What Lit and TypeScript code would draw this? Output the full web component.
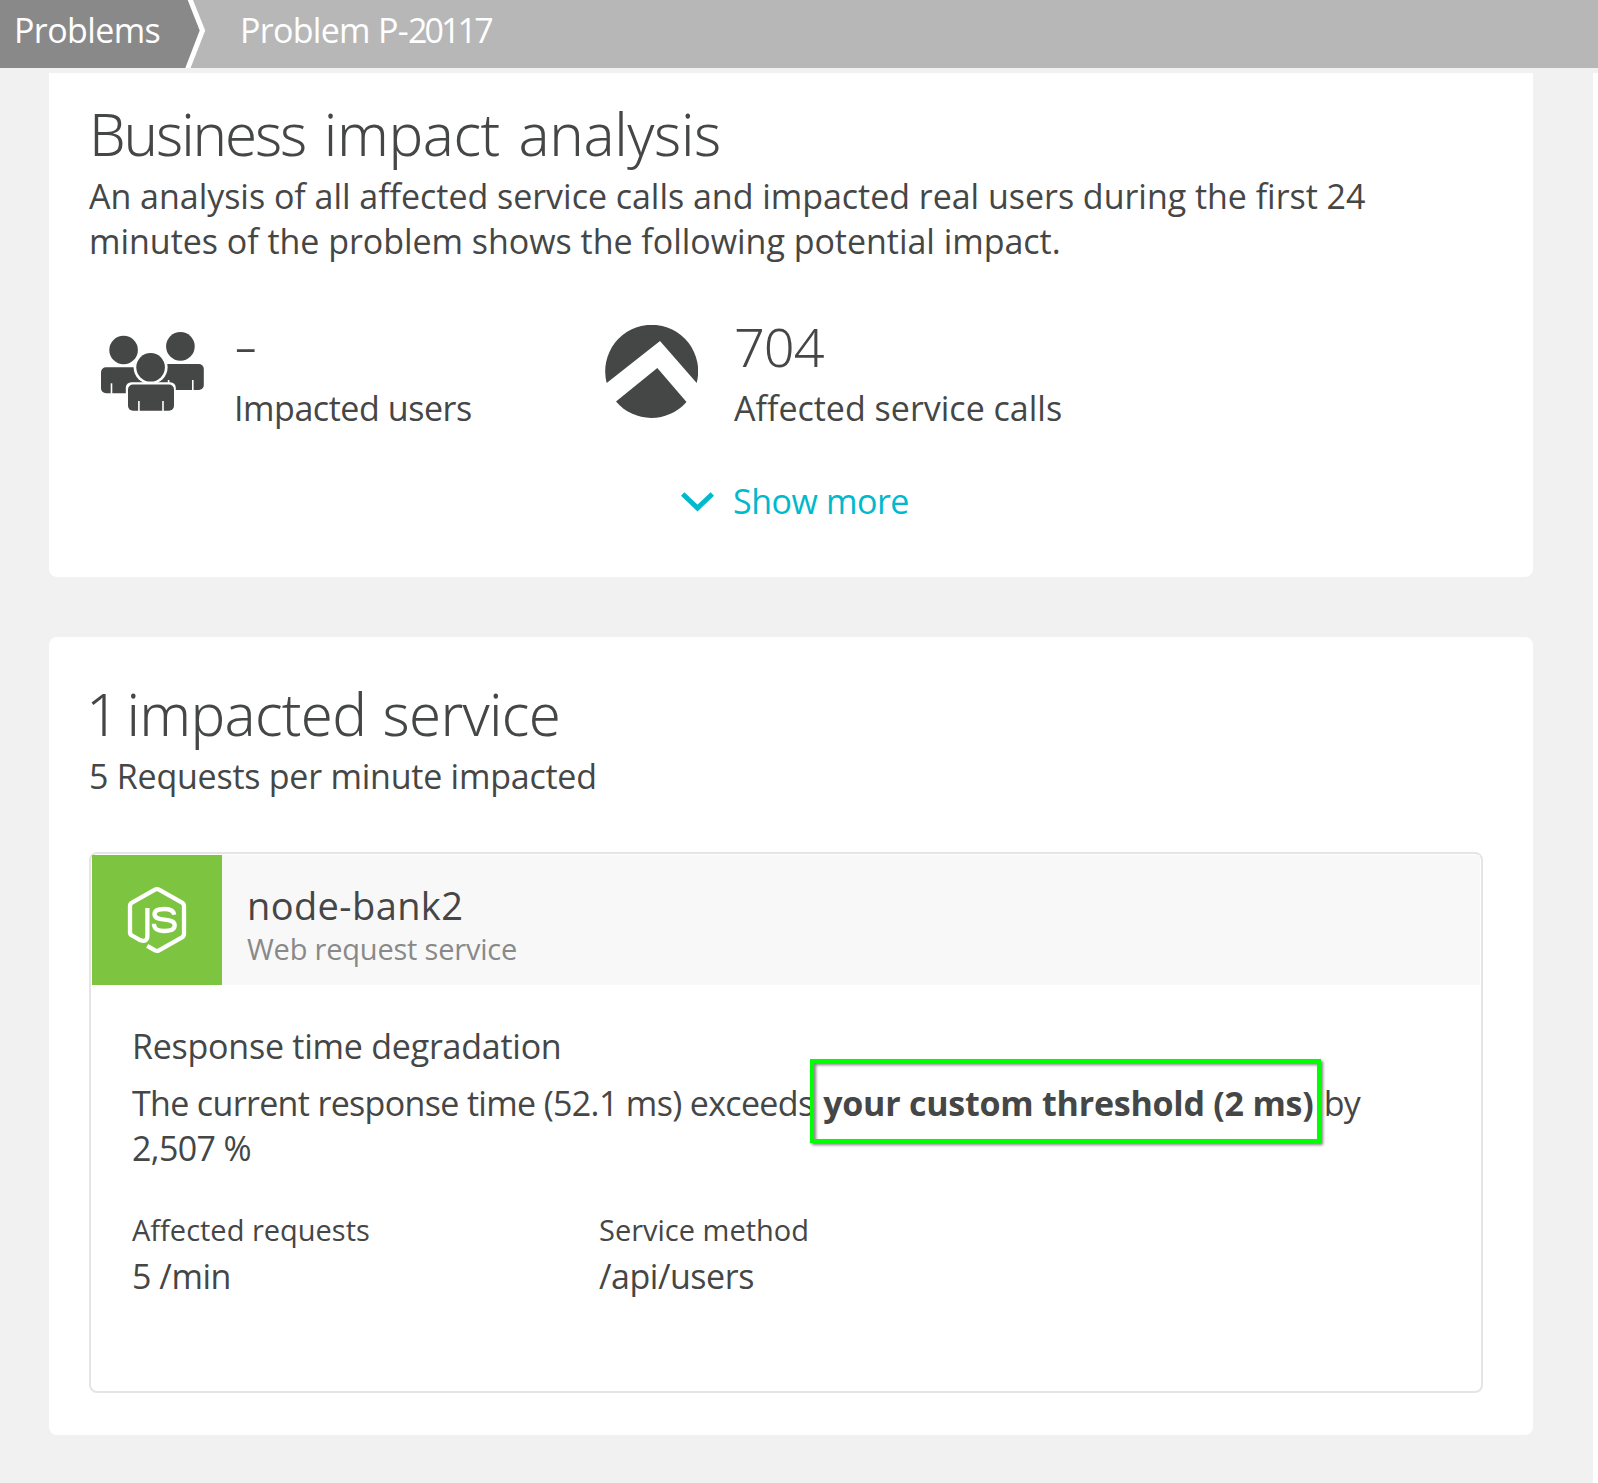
import { LitElement, html, css } from "lit";
import { customElement } from "lit/decorators.js";

const usersIcon = html`<svg class="users" viewBox="101 332 103 79" fill="#454646">
  <circle cx="180.4" cy="346.4" r="14.3" />
  <rect x="155" y="364" width="48.8" height="26" rx="5" />
  <path d="M192.8 380v10M168.6 380v5" stroke="#fff" stroke-width="1.6" />
  <circle cx="123.6" cy="350" r="14.3" />
  <path d="M106 367.3h40v26h-40a5 5 0 0 1-5-5v-16a5 5 0 0 1 5-5z" />
  <path d="M111.5 383.3v10.4" stroke="#fff" stroke-width="1.6" />
  <path d="M146 364l-1 14h14l-4-14z" />
  <circle cx="150.6" cy="367.3" r="17" fill="#fff" />
  <path d="M125.8 394v-6.300a5.500 5.500 0 0 1 5.500-5.500h39a5.500 5.500 0 0 1 5.500 5.500v6.300z" fill="#fff" />
  <circle cx="150.6" cy="367.3" r="14.300" />
  <rect x="128" y="384.600" width="46" height="26.200" rx="5" />
  <path d="M138.900 401v10M163 401v10" stroke="#fff" stroke-width="1.6" />
</svg>`;

const callsIcon = html`<svg class="calls" viewBox="605 325 93 93" fill="#454646">
  <path d="M606.700 383A46.500 46.500 0 1 1 696.700 383L660 341z" />
  <path d="M616 401.500L657.300 368L686.500 402A46.500 46.500 0 0 1 616 401.500z" />
</svg>`;

const nodeIcon = html`<svg class="node" viewBox="127 886 60 68" fill="none" stroke="#fff" stroke-width="4.300" stroke-linejoin="round">
  <path d="M147.400 908V935.500Q147.400 942.500 140.500 940.300L132 935.500Q130 934.500 130 932.500V906Q130 903.700 132 902.600L155 889.700Q157 888.600 159 889.700L182 902.600Q184 903.700 184 906V934Q184 936.200 182 937.300L159 950.300Q157 951.400 155 950.300L147.200 945.800" />
  <path d="M174.200 914.800C173.700 910 169.500 909 164.500 909C158 909 154.500 910.800 154.500 914.300C154.500 918.300 159 919 164.500 919.700C170.500 920.400 174.700 921.400 174.700 925.300C174.700 930 170 931 164.500 931C158 931 154 929.500 153.900 923.800" />
</svg>`;

@customElement("app-root")
export class AppRoot extends LitElement {
  static styles = css`
    :host {
      display: flex;
      flex-direction: column;
      height: 1483px;
      overflow: hidden;
      background: #f1f1f1;
      color: #454646;
      font: 400 34px/45px "Open Sans", "Noto Sans", sans-serif;
      font-variant-ligatures: none;
    }
    * { box-sizing: border-box; }
    svg { display: block; flex: none; }
    h1, h2, p { margin: 0; font-weight: 400; font-size: inherit; }
    .crumbs {
      display: flex;
      flex: none;
      height: 68px;
      background: #b7b7b7;
      color: #fff;
      line-height: 60px;
      white-space: nowrap;
    }
    .crumb-root { display: grid; width: 240px; letter-spacing: -0.6px; }
    .crumb-root > * { grid-area: 1 / 1; }
    .crumb-root span { padding-left: 14px; }
    .crumb-current { letter-spacing: -0.7px; }
    .digits { letter-spacing: -2.9px; }
    .page {
      flex: 1;
      display: flex;
      flex-direction: column;
      gap: 60px;
      margin-top: 5px;
      padding: 0 60px 0 49px;
      border-right: 5px solid #fff;
    }
    .card { background: #fff; border-radius: 8px; padding: 47px 40px 0; height: 798px; }
    .impact { border-radius: 0 0 8px 8px; padding-top: 31px; height: 504px; }
    .title {
      font: 300 58px/60px "Noto Sans", "Open Sans", sans-serif;
      letter-spacing: -0.4px;
      margin-bottom: 10px;
    }
    .impact .title { word-spacing: 4px; }
    .lead { letter-spacing: -2.1px; }
    .services { margin-left: -3px; letter-spacing: -0.7px; word-spacing: 2px; }
    .count { letter-spacing: -9px; }
    .intro { max-width: 1300px; letter-spacing: -0.03px; }
    .sub { letter-spacing: -0.24px; }
    .metrics { display: flex; margin-top: 52px; padding-left: 12px; }
    .metric { display: flex; gap: 30px; width: 504px; }
    .metric + .metric { gap: 36px; }
    .users { width: 103px; height: 79px; margin-top: 16px; }
    .calls { width: 93px; height: 93px; margin-top: 9px; }
    .value {
      font: 300 54px/60px "Noto Sans", "Open Sans", sans-serif;
      letter-spacing: -1px;
      margin-bottom: 10px;
    }
    .dash { display: block; width: 20px; transform: translateY(-2px) scaleX(1.35); transform-origin: 0 50%; }
    .tight { letter-spacing: -0.45px; }
    .more {
      display: flex;
      align-items: center;
      gap: 19px;
      margin: 48px 0 0 592px;
      color: #00b9cc;
      letter-spacing: -0.45px;
    }
    .service {
      width: 1394px;
      height: 541px;
      margin-top: 53px;
      padding: 1px;
      border: 2px solid #e5e5e5;
      border-radius: 8px;
    }
    .service-head { display: flex; height: 130px; background: #f8f8f8; }
    .badge {
      width: 130px;
      display: grid;
      place-items: center;
      background: #7dc540;
    }
    .node { width: 60px; height: 68px; }
    .names { padding: 28px 0 0 25px; }
    .name { font-size: 38px; line-height: 44px; letter-spacing: 0.4px; }
    .kind { margin-top: 4px; font-size: 29px; line-height: 36px; letter-spacing: -0.2px; color: #898989; }
    .detail { padding: 39px 80px 0 40px; }
    .event { letter-spacing: -0.24px; }
    .explain { margin-top: 12px; letter-spacing: -0.66px; }
    .threshold {
      position: relative;
      display: inline-block;
      height: 45px;
      margin: 0 2px 0 1.5px;
      font-weight: 700;
      letter-spacing: -0.24px;
      white-space: nowrap;
      vertical-align: top;
    }
    .threshold::after {
      content: "";
      position: absolute;
      inset: -22px -8px -17px -13px;
      border: 4px solid #00ff00;
      filter: drop-shadow(2px 2px 1.5px rgba(0, 0, 0, 0.5));
    }
    .facts { display: flex; margin-top: 41px; }
    .fact { width: 468px; }
    .fact:last-child { margin-left: -1px; }
    .fact-label { font-size: 29px; line-height: 36px; margin-bottom: 6px; }
  `;

  render() {
    return html`
      <nav class="crumbs">
        <div class="crumb-root">
          <svg width="206" height="68" viewBox="0 0 206 68">
            <path d="M0 0H190L203 30.500L187 68H0z" fill="#898989" />
            <path d="M187.700 0H193L205.200 30.500L190.600 68H185.300L199.700 30.500z" fill="#fff" />
          </svg>
          <span>Problems</span>
        </div>
        <div class="crumb-current">Problem P-<span class="digits">20117</span></div>
      </nav>
      <main class="page">
        <section class="card impact">
          <h1 class="title"><span class="lead">Business</span> impact analysis</h1>
          <p class="intro">An analysis of all affected service calls and impacted real users during the first 24 minutes of the problem shows the following potential impact.</p>
          <div class="metrics">
            <div class="metric">
              ${usersIcon}
              <div>
                <div class="value"><span class="dash">-</span></div>
                <div class="tight">Impacted users</div>
              </div>
            </div>
            <div class="metric">
              ${callsIcon}
              <div>
                <div class="value">704</div>
                <div>Affected service calls</div>
              </div>
            </div>
          </div>
          <div class="more">
            <svg width="33" height="20" viewBox="0 0 33 20" fill="none" stroke="#00b9cc" stroke-width="5">
              <path d="M1.700 2L16.500 16L31.300 2" />
            </svg>
            <span>Show more</span>
          </div>
        </section>
        <section class="card">
          <h2 class="title services"><span class="count">1</span> impacted service</h2>
          <p class="sub">5 Requests per minute impacted</p>
          <article class="service">
            <header class="service-head">
              <div class="badge">${nodeIcon}</div>
              <div class="names">
                <div class="name">node-bank2</div>
                <div class="kind">Web request service</div>
              </div>
            </header>
            <div class="detail">
              <p class="event">Response time degradation</p>
              <p class="explain">The current response time (52.1 ms) exceeds <b class="threshold">your custom threshold (2 ms)</b> by 2,507 %</p>
              <div class="facts">
                <div class="fact">
                  <div class="fact-label">Affected requests</div>
                  <div class="tight">5 /min</div>
                </div>
                <div class="fact">
                  <div class="fact-label">Service method</div>
                  <div class="tight">/api/users</div>
                </div>
              </div>
            </div>
          </article>
        </section>
      </main>
    `;
  }
}
